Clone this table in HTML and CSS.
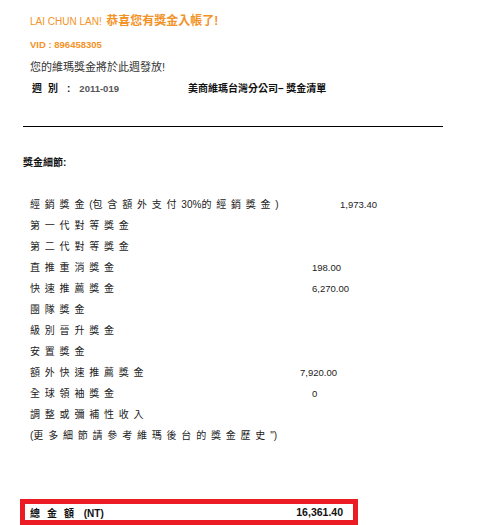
FILE: index.html
```html
<!DOCTYPE html>
<html lang="zh-Hant">
<head>
    <meta charset="UTF-8">
    <meta name="viewport" content="width=device-width, initial-scale=1.0">
    <title>獎金清單</title>
    <link rel="stylesheet" href="styles.css">
</head>
<body>
    <div class="mail">
        <p class="greet"><span class="name">LAI CHUN LAN!</span> <span class="cheer">恭喜您有獎金入帳了!</span></p>
        <p class="vid">VID : 896458305</p>
        <p class="notice">您的維瑪獎金將於此週發放!</p>
        <div class="meta">
            <span class="week"><span class="spaced">週別</span><span class="colon">:</span><span class="num">2011-019</span></span>
            <span class="title">美商維瑪台灣分公司– 獎金清單</span>
        </div>

        <div class="rule"></div>

        <h2>獎金細節:</h2>

        <!-- bonus rows -->
        <div class="items">
            <div class="row"><span class="label">經銷獎金<span class="tight">(</span>包含額外支付<span class="tight">30%</span>的經銷獎金)</span><span class="value col-1">1,973.40</span></div>
            <div class="row"><span class="label">第一代對等獎金</span><span class="value"></span></div>
            <div class="row"><span class="label">第二代對等獎金</span><span class="value"></span></div>
            <div class="row"><span class="label">直推重消獎金</span><span class="value col-2">198.00</span></div>
            <div class="row"><span class="label">快速推薦獎金</span><span class="value col-2">6,270.00</span></div>
            <div class="row"><span class="label">團隊獎金</span><span class="value"></span></div>
            <div class="row"><span class="label">級別晉升獎金</span><span class="value"></span></div>
            <div class="row"><span class="label">安置獎金</span><span class="value"></span></div>
            <div class="row"><span class="label">額外快速推薦獎金</span><span class="value col-3">7,920.00</span></div>
            <div class="row"><span class="label">全球領袖獎金</span><span class="value col-2">0</span></div>
            <div class="row"><span class="label">調整或彌補性收入</span><span class="value"></span></div>
            <div class="row"><span class="label"><span class="tight">(</span>更多細節請參考維瑪後台的獎金歷史<span class="tight">")</span></span><span class="value"></span></div>
        </div>

        <div class="total">
            <span class="total-label"><span class="spaced">總金額</span> (NT)</span>
            <span class="total-value">16,361.40</span>
        </div>
    </div>
</body>
</html>
```

FILE: styles.css
```css
* {
    margin: 0;
    padding: 0;
    box-sizing: border-box;
}
body {
    background-color: #fff;
    font-family: "Liberation Sans", Arial, "Noto Sans CJK TC", sans-serif;
    color: #222;
}
.mail {
    padding: 10px 0 0 23px;
    width: 470px;
}
.greet, .vid, .notice, .meta {
    padding-left: 7px;
}
.greet {
    line-height: 20px;
    color: #f39327;
}
.name {
    font-size: 10px;
}
.cheer {
    font-size: 12px;
    font-weight: bold;
}
.vid {
    margin-top: 2px;
    line-height: 22px;
    font-size: 9.5px;
    font-weight: bold;
    color: #f39327;
}
.notice {
    line-height: 22px;
    font-size: 11px;
    color: #333;
}
.meta {
    display: flex;
    line-height: 22px;
    font-size: 10px;
    font-weight: bold;
    color: #111;
}
.week {
    width: 158px;
    padding-left: 2px;
}
.spaced {
    letter-spacing: 6px;
}
.colon {
    margin: 0 9px 0 3px;
}
.num {
    font-size: 9.5px;
    color: #555;
}
.rule {
    margin-top: 26px;
    width: 420px;
    height: 1px;
    background-color: #000;
}
h2 {
    margin-top: 26px;
    line-height: 20px;
    font-size: 10px;
    font-weight: bold;
    color: #111;
}
.items {
    margin-top: 21px;
    padding-left: 7px;
}
.row {
    display: grid;
    grid-template-columns: 270px 1fr;
    height: 21px;
    line-height: 21px;
}
.label {
    font-size: 10px;
    letter-spacing: 4.8px;
    white-space: nowrap;
    color: #222;
}
.tight {
    letter-spacing: 0;
}
.value {
    font-size: 9.5px;
    color: #222;
}
.col-1 {
    padding-left: 40px;
}
.col-2 {
    padding-left: 12px;
}
.col-3 {
    padding-left: 0;
}
.total {
    display: flex;
    justify-content: space-between;
    align-items: center;
    margin: 53px 0 0 -3px;
    width: 338px;
    height: 26px;
    border: 5px solid #ec1c24;
    padding: 0 10px 0 5px;
    font-size: 10px;
    font-weight: bold;
    color: #111;
}
.total-label .spaced {
    letter-spacing: 7px;
}
.total-value {
    font-size: 10.5px;
}
```
